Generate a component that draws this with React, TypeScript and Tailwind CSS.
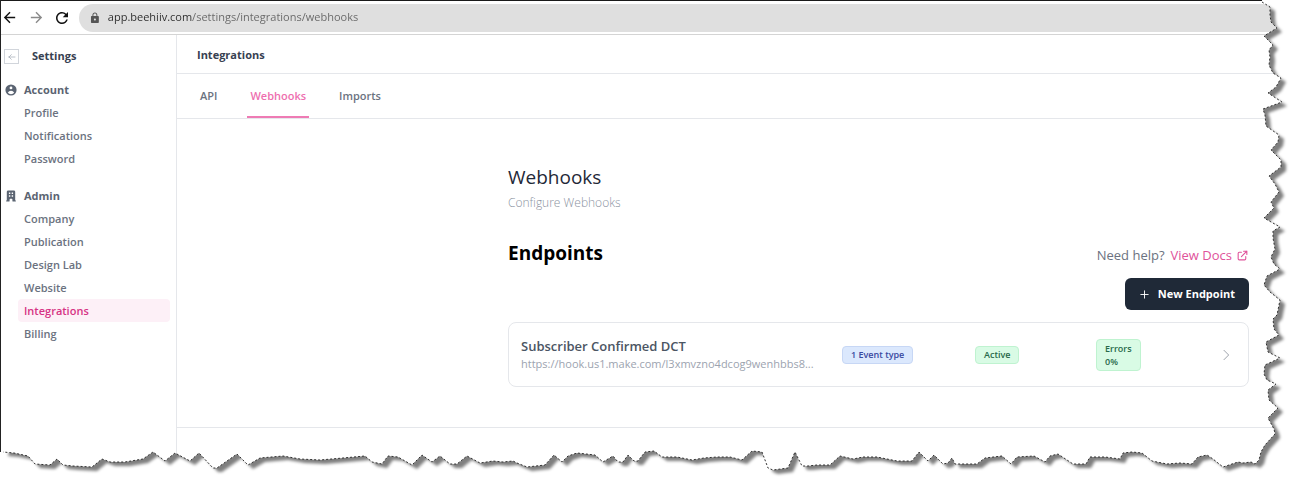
import { useState } from "react";
import { MdArrowBack, MdArrowForward, MdRefresh, MdLock } from "react-icons/md";
import {
    HiUserCircle,
    HiOfficeBuilding,
    HiOutlineArrowLeft,
    HiOutlineChevronRight,
    HiOutlineExternalLink,
    HiOutlinePlus,
} from "react-icons/hi";

type Endpoint = {
    id: string;
    name: string;
    url: string;
    eventTypes: number;
    status: string;
    errorRate: string;
};

const accountLinks = ["Profile", "Notifications", "Password"];
const adminLinks = ["Company", "Publication", "Design Lab", "Website", "Integrations", "Billing"];
const tabs = ["API", "Webhooks", "Imports"];

const endpoints: Endpoint[] = [
    {
        id: "1",
        name: "Subscriber Confirmed DCT",
        url: "https://hook.us1.make.com/l3xmvzno4dcog9wenhbbs8...",
        eventTypes: 1,
        status: "Active",
        errorRate: "0%",
    },
];

// Ragged paper edge, from the top right corner down and then back to the left
const tornEdge =
    "1262,2 1270,7 1270,15 1271,22 1277,28 1264,36 1273,45 1269,50 1270,57 1269,65 1273,73 1281,78 1276,87 1268,93 1282,102 1263,109 1265,115 1266,126 1279,135 1278,142 1271,150 1281,160 1281,167 1269,176 1275,184 1279,192 1271,202 1274,208 1264,218 1280,227 1273,231 " +
    "1273,238 1275,249 1271,257 1274,264 1280,269 1267,276 1264,285 1270,292 1280,300 1277,315 1273,319 1274,329 1279,335 1266,342 1268,352 1280,358 1265,365 1264,374 1267,380 1276,384 1268,390 1269,400 1278,408 1268,418 1274,429 1275,434 1265,445 1261,452 1259,460 1255,464 " +
    "1251,462 1243,463 1238,462 1223,467 1213,459 1207,455 1198,457 1192,464 1180,463 1167,464 1152,461 1142,453 1132,452 1123,453 1120,459 1105,457 1090,457 1086,464 1073,464 1058,454 1050,456 1045,462 1034,456 1017,457 1011,464 1002,456 985,458 977,464 960,464 " +
    "955,464 952,458 948,463 943,464 934,455 928,461 919,452 912,461 897,461 877,457 863,457 853,459 840,456 830,465 817,465 808,466 802,466 795,452 788,468 773,470 768,468 762,452 752,451 742,460 730,457 717,457 704,458 692,460 677,457 662,457 654,451 645,452 " +
    "638,461 634,461 628,455 623,462 618,462 613,456 603,462 595,455 577,453 568,456 562,462 554,455 545,465 527,467 517,463 513,461 503,462 493,461 480,463 467,456 457,464 450,464 440,456 432,462 422,455 412,465 398,457 388,456 382,464 372,462 365,456 343,458 320,460 " +
    "300,459 283,456 260,458 248,465 237,454 217,468 213,468 199,453 190,461 175,453 165,461 153,452 143,459 125,462 110,462 102,459 92,467 73,466 63,465 57,459 50,465 35,464 28,456 14,453 3,452";

function TornEdge() {
    return (
        <svg
            className="pointer-events-none absolute inset-0 h-full w-full"
            viewBox="0 0 1292 477"
            preserveAspectRatio="none"
            aria-hidden="true"
        >
            <defs>
                <clipPath id="outside">
                    <polygon points={`1262,0 ${tornEdge} 0,452 0,477 1292,477 1292,0`} />
                </clipPath>
                <filter id="soften">
                    <feGaussianBlur stdDeviation="1.5" />
                </filter>
            </defs>
            <g clipPath="url(#outside)">
                <rect width="1292" height="477" fill="#fff" />
                <polygon
                    points={`1255,22 ${tornEdge} 6,440`}
                    transform="translate(5 4)"
                    fill="#000"
                    fillOpacity="0.5"
                    filter="url(#soften)"
                />
            </g>
            <polyline points={tornEdge} fill="none" stroke="#333" strokeDasharray="2 2" />
        </svg>
    );
}

function BrowserBar() {
    return (
        <div className="flex h-[35px] shrink-0 items-center border-t border-b border-t-[#1a1a1a] border-b-[#d4d4d4]">
            <button aria-label="Back" className="text-[#111]">
                <MdArrowBack size={17} />
            </button>
            <button aria-label="Forward" className="ml-2.5 text-[#8a8a8a]">
                <MdArrowForward size={17} />
            </button>
            <button aria-label="Reload" className="ml-2 text-[#111]">
                <MdRefresh size={18} />
            </button>
            <div className="ml-2 flex h-7 flex-1 items-center rounded-l-full bg-[#dfdfdf] pl-2.5">
                <MdLock size={12} className="text-[#555]" />
                <input
                    type="text"
                    aria-label="Address"
                    readOnly
                    value="app.beehiiv.com/settings/integrations/webhooks"
                    className="ml-[7px] w-full bg-[linear-gradient(90deg,#2b2b2b_84px,#666_84px)] bg-clip-text text-[11px] text-transparent outline-none"
                />
            </div>
        </div>
    );
}

function NavLinks({ links, active }: { links: string[]; active: string }) {
    return (
        <ul className="ml-[17px] mr-1.5">
            {links.map((link) => (
                <li key={link}>
                    <a
                        href="#"
                        className={
                            link === active
                                ? "block rounded-sm bg-[#fdf0f7] pl-1.5 font-semibold leading-[23px] text-[#d63384]"
                                : "block rounded-sm pl-1.5 font-semibold leading-[23px] text-[#6b7280]"
                        }
                    >
                        {link}
                    </a>
                </li>
            ))}
        </ul>
    );
}

function Sidebar() {
    return (
        <nav className="w-[175px] shrink-0 text-[11px]">
            <div className="flex h-[43px] items-center pl-[3px]">
                <button
                    aria-label="Go back"
                    className="flex size-[15px] items-center justify-center border border-[#d1d5db] text-[#9ca3af]"
                >
                    <HiOutlineArrowLeft size={8} />
                </button>
                <h2 className="ml-[13px] font-bold text-[#374151]">Settings</h2>
            </div>
            <h3 className="flex items-center gap-1.5 pl-[3px] font-bold leading-[23px] text-[#5b6472]">
                <HiUserCircle size={14} />
                Account
            </h3>
            <NavLinks links={accountLinks} active="Integrations" />
            <h3 className="mt-3.5 flex items-center gap-1.5 pl-[3px] font-bold leading-[23px] text-[#5b6472]">
                <HiOfficeBuilding size={14} />
                Admin
            </h3>
            <NavLinks links={adminLinks} active="Integrations" />
        </nav>
    );
}

function EndpointCard({ endpoint }: { endpoint: Endpoint }) {
    return (
        <a
            href="#"
            className="grid h-[65px] grid-cols-[321px_133px_121px_1fr] items-center rounded-lg border border-[#e5e7eb] pl-3 pr-3.5"
        >
            <div className="pr-6">
                <p className="truncate text-[13px] leading-[18px] font-semibold text-[#4b5563]">{endpoint.name}</p>
                <p className="text-[11px] leading-[18px] whitespace-nowrap text-[#9ca3af]">{endpoint.url}</p>
            </div>
            <div className="flex">
                <span className="rounded border border-[#c7d7f5] bg-[#dbe8fd] px-2 text-[9px] leading-4 font-semibold text-[#3949a0]">
                    {endpoint.eventTypes} Event type
                </span>
            </div>
            <div className="flex">
                <span className="rounded border border-[#bff3d0] bg-[#d9fbe5] px-2 text-[9px] leading-4 font-semibold text-[#28694a]">
                    {endpoint.status}
                </span>
            </div>
            <div className="flex items-center justify-between">
                <span className="rounded border border-[#bff3d0] bg-[#d9fbe5] px-2 py-0.5 text-[9px] leading-[13px] font-semibold text-[#28694a]">
                    Errors
                    <br />
                    {endpoint.errorRate}
                </span>
                <HiOutlineChevronRight size={16} strokeWidth={1} className="text-[#6b7280]" />
            </div>
        </a>
    );
}

export default function App() {
    const [activeTab, setActiveTab] = useState("Webhooks");

    return (
        <div className="relative flex min-h-screen overflow-hidden bg-white font-['Open_Sans','Noto_Sans',sans-serif]">
            <div className="flex flex-1 flex-col border-l border-[#222]">
                <BrowserBar />
                <div className="flex flex-1">
                    <Sidebar />
                    <main className="flex-1 border-l border-[#e5e7eb]">
                        <header className="flex h-[39px] items-center border-b border-[#e5e7eb] pt-0.5 pl-5">
                            <h1 className="text-[11px] font-bold text-[#374151]">Integrations</h1>
                        </header>
                        <div className="flex h-[45px] gap-[27px] border-b border-[#e5e7eb] pl-5 text-[11px] font-semibold">
                            {tabs.map((tab) => (
                                <button
                                    key={tab}
                                    onClick={() => setActiveTab(tab)}
                                    className={
                                        tab === activeTab
                                            ? "border-b-2 border-[#ee7bb4] px-[3px] pt-0.5 text-[#ee6faf]"
                                            : "border-b-2 border-transparent px-[3px] pt-0.5 text-[#6b7280]"
                                    }
                                >
                                    {tab}
                                </button>
                            ))}
                        </div>
                        <section className="mr-[43px] ml-auto max-w-[741px] pt-11 pb-10">
                            <h2 className="text-[19px] leading-7 text-[#1f2937]">Webhooks</h2>
                            <p className="text-xs leading-6 font-light text-[#8b93a1]">Configure Webhooks</p>
                            <div className="mt-6 flex items-end justify-between">
                                <h2 className="text-[19px] leading-7 font-bold text-black">Endpoints</h2>
                                <p className="flex items-center text-[13px] leading-6 text-[#6b7280]">
                                    Need help?
                                    <a href="#" className="ml-1.5 flex items-center gap-1 text-[#e0529a]">
                                        View Docs
                                        <HiOutlineExternalLink size={13} />
                                    </a>
                                </p>
                            </div>
                            <div className="mt-[11px] flex justify-end">
                                <button className="flex h-8 items-center gap-2 rounded-md bg-[#1f2937] px-3.5 text-[11px] font-bold text-white">
                                    <HiOutlinePlus size={11} />
                                    New Endpoint
                                </button>
                            </div>
                            <div className="mt-3">
                                {endpoints.map((endpoint) => (
                                    <EndpointCard key={endpoint.id} endpoint={endpoint} />
                                ))}
                            </div>
                        </section>
                        <hr className="border-[#e5e7eb]" />
                    </main>
                </div>
            </div>
            <TornEdge />
        </div>
    );
}
